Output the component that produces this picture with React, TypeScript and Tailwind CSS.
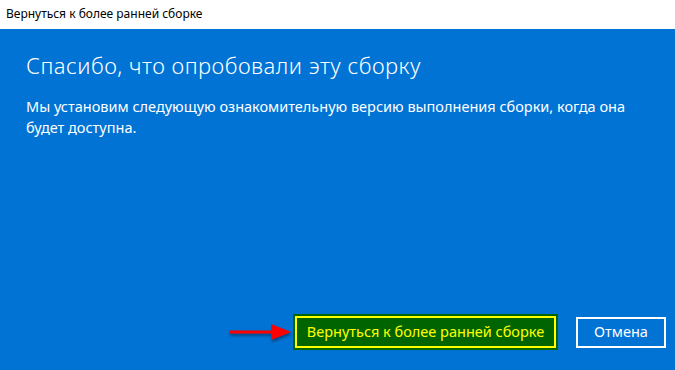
import React from 'react';

const Arrow: React.FC = () => (
  <svg width="68" height="24" viewBox="0 0 68 24">
    <defs>
      <filter id="sh" x="-20%" y="-50%" width="140%" height="200%">
        <feDropShadow dx="1" dy="2" stdDeviation="1.5" floodColor="#000" floodOpacity="0.45" />
      </filter>
    </defs>
    <g filter="url(#sh)">
      <path d="M2 10.5 L44 10.5 L44 4 L64 12 L44 20 L44 13.5 L2 13.5 Z" fill="#ff0000" />
    </g>
  </svg>
);

export default function App() {
  return (
    <div className="w-[675px] h-[370px] flex flex-col overflow-hidden font-['Noto_Sans',sans-serif]">
      {/* Title bar */}
      <div className="h-[29px] bg-white flex items-center px-[6px] pb-[2px]">
        <span className="text-[12px] text-black">Вернуться к более ранней сборке</span>
      </div>

      {/* Content */}
      <div className="flex-1 bg-[#0173d5] flex flex-col text-white">
        <div className="pl-[26px] pt-[21px]">
          <h1 className="text-[22px] font-light leading-[30px] tracking-[0.5px]">
            Спасибо, что опробовали эту сборку
          </h1>
          <p className="mt-[16px] w-[610px] text-[14.5px] leading-[21px]">
            Мы установим следующую ознакомительную версию выполнения сборки, когда она будет доступна.
          </p>
        </div>

        <div className="mt-auto flex items-center justify-end pr-[9px] pb-[20px]">
          <Arrow />
          <button className="h-[36px] w-[265px] ml-[-2px] bg-[#006400] border-2 border-[#006400] flex">
            <span className="flex-1 border-2 border-[#ffff00] flex items-center justify-center text-[#ffff00] text-[14.5px]">
              Вернуться к более ранней сборке
            </span>
          </button>
          <button className="ml-[18px] h-[31px] w-[90px] border-2 border-white text-white text-[14.5px] flex items-center justify-center">
            Отмена
          </button>
        </div>
      </div>
    </div>
  );
}
